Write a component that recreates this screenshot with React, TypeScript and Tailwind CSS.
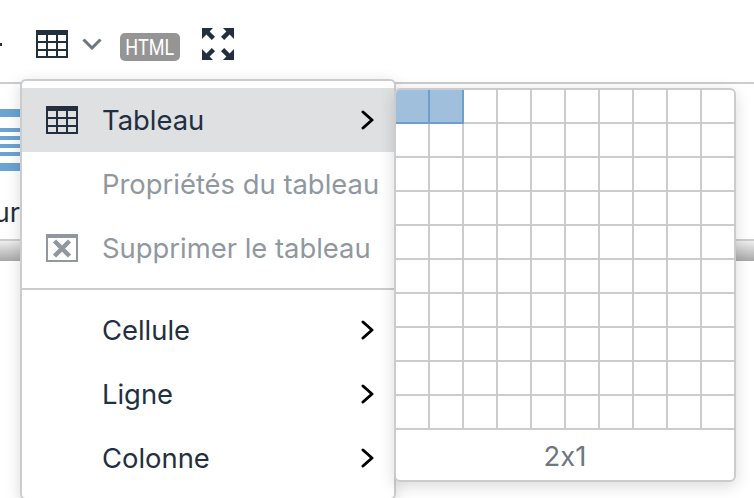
import React from "react";

const TableIcon: React.FC<{ className?: string }> = ({ className }) => (
  <svg width="32" height="28" viewBox="0 0 32 28" className={className}>
    <path
      fill="currentColor"
      fillRule="evenodd"
      d="M0 0h32v28H0zM2 5v6h8V5zm10 0v6h8V5zm10 0v6h8V5zM2 13v6h8v-6zm10 0v6h8v-6zm10 0v6h8v-6zM2 21v5h8v-5zm10 0v5h8v-5zm10 0v5h8v-5z"
    />
  </svg>
);

const DeleteTableIcon: React.FC = () => (
  <svg width="32" height="28" viewBox="0 0 32 28" className="text-[#91979f]">
    <path fill="currentColor" fillRule="evenodd" d="M0 0h32v28H0zM2 4v22h28V4z" />
    <path d="M8.5 7l15 15M23.5 7l-15 15" stroke="currentColor" strokeWidth="4.5" fill="none" />
  </svg>
);

const Chevron: React.FC = () => (
  <svg width="16" height="20" viewBox="0 0 16 20" className="text-black">
    <path d="M3 2l9 8-9 8" stroke="currentColor" strokeWidth="3" strokeLinecap="round" strokeLinejoin="round" fill="none" />
  </svg>
);

const FullscreenIcon: React.FC = () => (
  <svg width="32" height="32" viewBox="0 0 32 32" className="text-[#222f3e]">
    <g fill="currentColor">
      <path d="M0 0h11L7.6 3.4l5.4 5.4-3.2 3.2-5.4-5.4L0 11z" />
      <path d="M32 0H21l3.4 3.4L19 8.8l3.2 3.2 5.4-5.4L32 11z" />
      <path d="M0 32h11l-3.4-3.4 5.4-5.4-3.2-3.2-5.4 5.4L0 21z" />
      <path d="M32 32H21l3.4-3.4-5.4-5.4 3.2-3.2 5.4 5.4L32 21z" />
    </g>
  </svg>
);

const MenuItem: React.FC<{
  label: string;
  icon?: React.ReactNode;
  active?: boolean;
  disabled?: boolean;
  arrow?: boolean;
}> = ({ label, icon, active, disabled, arrow }) => (
  <div
    className={`flex h-16 items-center pl-6 pr-[18px] text-[27.4px] ${active ? "bg-[#dee0e2]" : ""} ${
      disabled ? "text-[#91979f]" : "text-[#222f3e]"
    }`}
  >
    <div className="mr-6 flex w-8 shrink-0 items-center justify-center">{icon}</div>
    <span className="flex-1 whitespace-nowrap pt-[2px]">{label}</span>
    {arrow && <Chevron />}
  </div>
);

const App: React.FC = () => {
  const cells = Array.from({ length: 100 }, (_, i) => i);

  return (
    <div className="relative h-[498px] w-[754px] overflow-hidden bg-white font-['Inter',sans-serif] [font-feature-settings:'calt'_0]">
      {/* Toolbar */}
      <div className="relative flex h-[84px] items-start border-b-2 border-[#cccccc]">
        <div className="mt-[43px] h-[3px] w-[2px] bg-[#222f3e]" />
        <TableIcon className="ml-[34px] mt-[30px] text-[#222f3e]" />
        <svg width="20" height="12" viewBox="0 0 20 12" className="ml-[14px] mt-[38px] text-[#6d7682]">
          <path d="M1.5 1.5L10 10l8.5-8.5" stroke="currentColor" strokeWidth="3" fill="none" />
        </svg>
        <div className="ml-[18px] mt-[33px] flex h-7 w-[60px] items-center justify-center rounded-[5px] bg-[#959595] font-['Roboto',sans-serif] text-[22px] text-white">
          <span className="inline-block scale-x-[0.82]">HTML</span>
        </div>
        <div className="ml-[22px] mt-[28px]">
          <FullscreenIcon />
        </div>
      </div>

      {/* Page content behind the menus */}
      <div className="w-5 overflow-hidden pt-[25px]">
        <div className="h-2 bg-[#6ba3d2]" />
        <div className="mt-[11px] flex flex-col gap-1">
          <div className="h-1 bg-[#6ba3d2]" />
          <div className="h-1 bg-[#6ba3d2]" />
          <div className="h-1 bg-[#6ba3d2]" />
          <div className="h-1 bg-[#6ba3d2]" />
        </div>
        <div className="mt-[7px] h-2 bg-[#6ba3d2]" />
      </div>
      <div className="mt-[26px] flex h-[42px] w-5 justify-end overflow-hidden text-[27px] leading-[32px] text-[#222f3e]">
        <span>ur</span>
      </div>
      <div className="h-[22px] border-t-2 border-[#cccccc] bg-gradient-to-b from-[#eeeeee] to-[#a8a8a8]" />

      {/* Menu */}
      <div className="absolute left-5 top-[79px] w-[376px] rounded-md border-2 border-[#cccccc] bg-white pb-2 pt-[7px] shadow-[0_4px_16px_rgba(0,0,0,0.15)]">
        <MenuItem label="Tableau" active arrow icon={<TableIcon className="text-[#222f3e]" />} />
        <MenuItem label="Propriétés du tableau" disabled />
        <MenuItem label="Supprimer le tableau" disabled icon={<DeleteTableIcon />} />
        <div className="my-2 h-0.5 bg-[#cccccc]" />
        <MenuItem label="Cellule" arrow />
        <MenuItem label="Ligne" arrow />
        <MenuItem label="Colonne" arrow />
      </div>

      {/* Table size picker */}
      <div className="absolute left-[394px] top-[88px] w-[342px] overflow-hidden rounded-md border-2 border-[#cccccc] bg-white shadow-[0_4px_16px_rgba(0,0,0,0.15)]">
        <div className="grid grid-cols-[repeat(10,34px)]">
          {cells.map((i) => (
            <div
              key={i}
              className={`h-[34px] border-b-2 border-r-2 ${
                i < 2 ? "border-[#6c9fca] bg-[#9fbfdc]" : "border-[#cccccc]"
              }`}
            />
          ))}
        </div>
        <div className="flex h-[50px] items-center justify-center pt-[3px] text-[27.4px] text-[#6d7682]">2x1</div>
      </div>
    </div>
  );
};

export default App;
